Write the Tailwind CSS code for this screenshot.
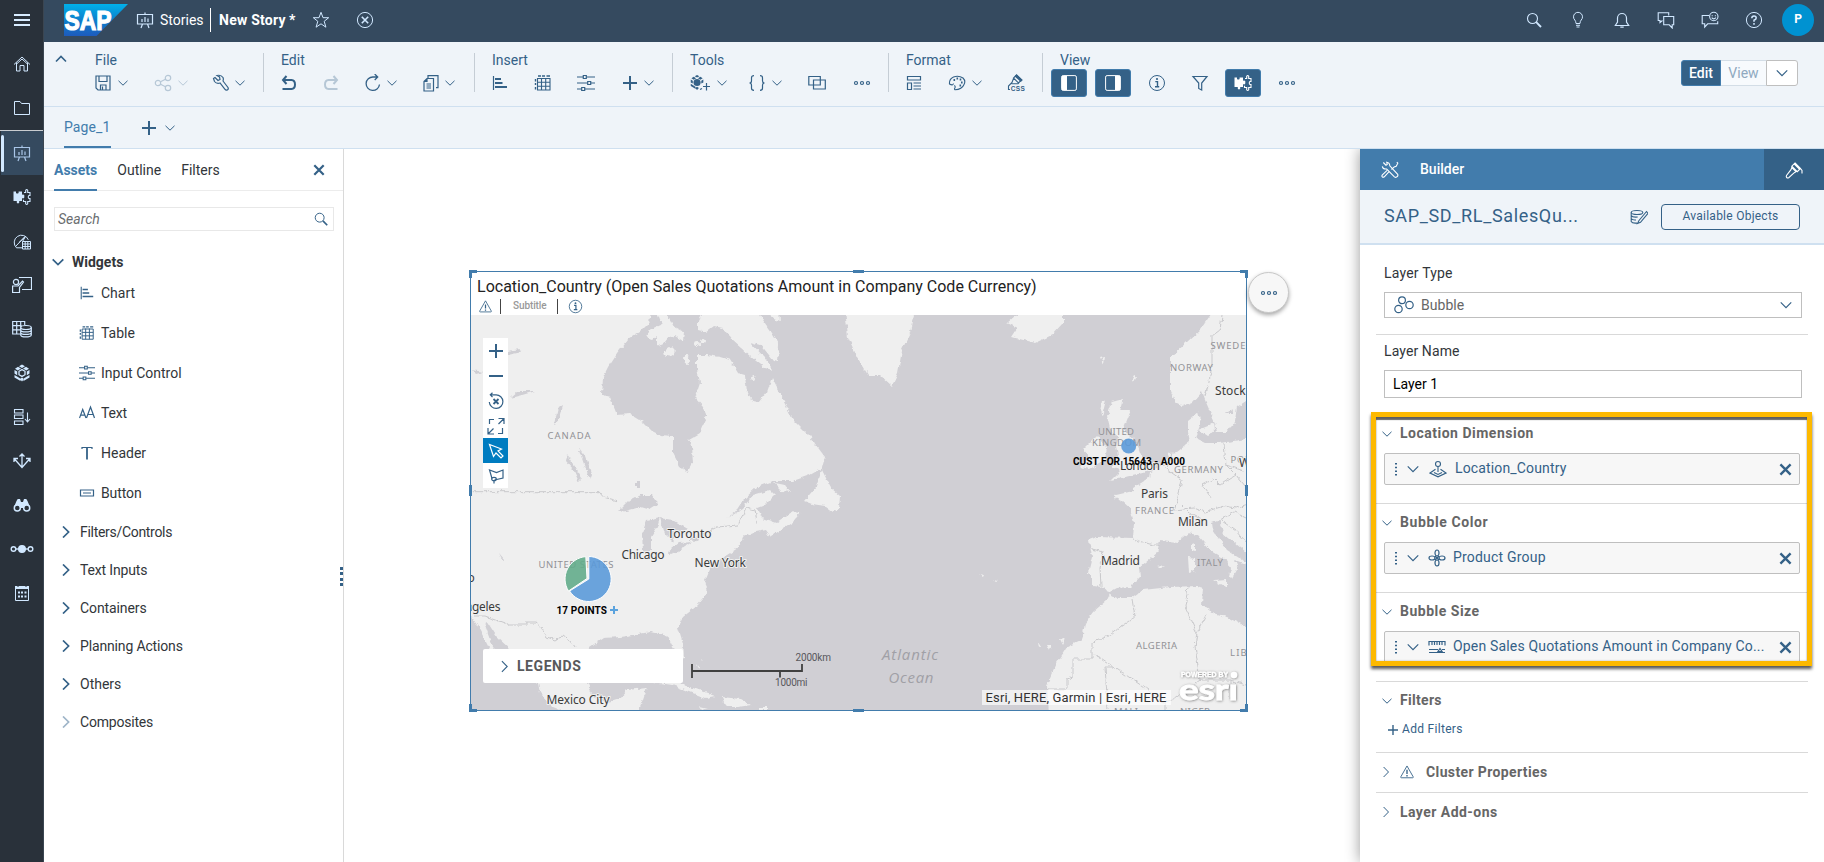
<!DOCTYPE html>
<html lang="en">
<head>
<meta charset="utf-8">
<title>New Story</title>
<script src="https://cdn.jsdelivr.net/npm/@tailwindcss/browser@4"></script>
</head>
<body class="w-[1824px] h-[862px] overflow-hidden bg-white font-[Roboto,'Liberation_Sans',sans-serif] text-sm text-[#32363a]">

<svg width="0" height="0" class="absolute" fill="none">
  <defs>
    <symbol id="down" viewBox="0 0 12 12"><path d="M1.500 3.800 6 8.200l4.500-4.400" fill="none" stroke="currentColor"/></symbol>
    <symbol id="downb" viewBox="0 0 12 12"><path d="M.7 3.300 6 8.500l5.300-5.200" fill="none" stroke="currentColor" stroke-width="1.700"/></symbol>
    <symbol id="right" viewBox="0 0 12 12"><path d="M3.600 1 8.500 6l-4.900 5" fill="none" stroke="currentColor"/></symbol>
    <symbol id="rightb" viewBox="0 0 12 12"><path d="M3 .5 8.600 6 3 11.500" fill="none" stroke="currentColor" stroke-width="1.700"/></symbol>
    <symbol id="up" viewBox="0 0 12 12"><path d="M1 8.500 6 3.500l5 5" fill="none" stroke="currentColor" stroke-width="1.600"/></symbol>
    <symbol id="x" viewBox="0 0 12 12"><path d="M1.300 1.300l9.400 9.400M10.700 1.300l-9.400 9.400" fill="none" stroke="currentColor" stroke-width="2.200"/></symbol>
    <symbol id="plus" viewBox="0 0 18 18"><path d="M9 2v14M2 9h14" fill="none" stroke="currentColor" stroke-width="2"/></symbol>
    <symbol id="dots" viewBox="0 0 18 18"><g fill="none" stroke="currentColor" stroke-width="1.200"><circle cx="3" cy="9" r="1.500"/><circle cx="9" cy="9" r="1.500"/><circle cx="15" cy="9" r="1.500"/></g></symbol>
    <symbol id="search" viewBox="0 0 18 18"><g fill="none" stroke="currentColor" stroke-width="1.100"><circle cx="7.500" cy="7.500" r="5"/><path d="M11.200 11.200l4.800 4.800" stroke-width="1.900"/></g></symbol>
    <symbol id="info" viewBox="0 0 18 18"><circle cx="9" cy="9" r="7.500" fill="none" stroke="currentColor"/><path d="M7.300 7.600h2.200v5M7 12.800h4.200" fill="none" stroke="currentColor" stroke-width="1.400"/><circle cx="9" cy="5" r="1.100" fill="currentColor"/></symbol>
    <symbol id="warn" viewBox="0 0 18 18"><path d="M9 2.200 16 14.500q.3 1-.8 1H2.800q-1.100 0-.8-1z" fill="none" stroke="currentColor"/><path d="M9 6.500v4.800M9 12.500v1.600" stroke="currentColor" stroke-width="1.500"/></symbol>
    <symbol id="easel" viewBox="0 0 18 18"><path d="M1.500 3.500h15v9.500h-15zM9 1.500v2M6.500 13l-1.500 4M11.500 13l1.500 4M6 8v3M9 6v5M12 7.500V11" fill="none" stroke="currentColor" stroke-width="1.200"/></symbol>
    <symbol id="puzzle" viewBox="0 0 18 18"><path d="M.5 3.500H3V5q1.300 1.200 2.600 0V3.500H9v3.300q1.500-.8 2.300.5v2.200q-.8 1.400-2.300.6V13H6.200v1.800q-1.200 1.500-2.400 0V13H.5z" fill="currentColor"/><path d="M11 4.500h1.700V2.300q1-1.600 2 0v2.200H17v3h-1.200q-1.300 1.500 0 3H17v3h-2.300v2.200q-1 1.600-2 0v-2.200h-2.200v-1.700" fill="none" stroke="currentColor" stroke-width="1.100"/></symbol>
    <symbol id="chart" viewBox="0 0 18 18"><path d="M2.500 2v14" stroke="currentColor" stroke-width="1.200"/><path d="M4 5h6M4 9h7.500M4 13h12" fill="none" stroke="currentColor" stroke-width="1.800"/></symbol>
    <symbol id="table" viewBox="0 0 18 18"><path d="M3.500 4.500h12.500v11.500H3.500zM7.500 4v12M11.700 4v12M3.500 8.300H16M3.500 12.200H16" fill="none" stroke="currentColor" stroke-width="1.100"/><path d="M4 2h3M8 2h3M12.500 2h3.500M1.500 5v2.500M1.500 9v2M1.500 13v2.500" stroke="currentColor" stroke-width="1.400"/></symbol>
    <symbol id="sliders" viewBox="0 0 18 18"><path d="M0 3h6M9.500 3H18M0 9h10.500M14 9h4M0 15h4.500M8 15h10" stroke="currentColor" stroke-width="1.200"/><path d="M6.300 1.500h3v3h-3zM10.700 7.500h3v3h-3zM4.700 13.500h3v3h-3z" fill="none" stroke="currentColor" stroke-width="1.200"/></symbol>
    <symbol id="cube" viewBox="0 0 18 18"><path d="M9 .5 12 2.200 9 4 6 2.200zM5 2.800 8 4.600 4.800 6.400 2 4.700zM13 2.800l3 1.900-2.800 1.700L10 4.600zM1.500 6l2.700 1.600v3.600L1.500 9.600zM16.500 6v3.600l-2.700 1.600V7.600zM1.500 11l3 1.700 3.200 2-.2 2.300-6-3.500zM16.500 11l-3 1.700-3.200 2 .2 2.300 6-3.500zM9 13.600l2 1.500-2 2.400-2-2.400z" fill="currentColor"/><path d="M9 5.600l3 1.700v3.400l-3 1.700-3-1.700V7.300z" fill="none" stroke="currentColor" stroke-width="1.300"/></symbol>
    <symbol id="brush" viewBox="0 0 18 18"><path d="M10 2l5.500 5.500-3.200 3.200-5.500-5.500zM6.800 6.500 11 10.700 9.300 11.700 3.700 16.700q-1.200.6-2-.2t-.2-2L6 8.700zM15.500 7.500l1.500 2v3" fill="none" stroke="currentColor" stroke-width="1.100"/><path d="M10 2l5.500 5.500-1.300 1.300-5.500-5.500z" fill="currentColor"/></symbol>
  </defs>
</svg>

<div class="flex h-full w-full">

<!-- Shell navigation -->
<nav class="flex w-11 shrink-0 flex-col border-r border-[#3b4651] bg-[#29313a] text-[#d1e8ff]">
  <div class="flex h-[42px] items-center justify-center"><svg class="-mt-0.5 h-4 w-4" viewBox="0 0 16 16"><path d="M0 3h16M0 8h16M0 13h16" stroke="#d8ecff" stroke-width="1.800"/></svg></div>
  <div class="flex h-11 items-center justify-center"><svg class="h-[18px] w-[18px]" viewBox="0 0 18 18" fill="none" stroke="currentColor"><path d="M1 9.500 9 2l8 7.500M3.500 7.500V16h3.500v-5.500h4V16h3.500V7.500M3 9.500l6-5.500 6 5.500"/></svg></div>
  <div class="flex h-[45px] items-center justify-center border-b border-[#c8ccd0]"><svg class="h-[18px] w-[18px]" viewBox="0 0 18 18" fill="none" stroke="currentColor"><path d="M1.500 15.500v-13H7l1.500 2h8v11z"/></svg></div>
  <div class="flex h-11 items-center border-l border-[#29313a] bg-[#354a5f]"><div class="h-[37px] w-[3px] rounded-sm bg-[#d1e8ff]"></div><svg class="ml-[9px] h-[18px] w-[18px] text-[#a9c6e8]"><use href="#easel"/></svg></div>
  <div class="flex h-11 items-center justify-center"><svg class="h-[18px] w-[18px]"><use href="#puzzle"/></svg></div>
  <div class="flex h-11 items-center justify-center"><svg class="h-[18px] w-[18px]" viewBox="0 0 18 18" fill="none" stroke="currentColor"><path d="M9 15.800H3.500a7.300 7.300 0 1 1 11.800-8M3 14l9-9.500M6 10.500l6.500-6-3 5"/><path d="M9.500 9.500h8v7.500h-8zM12.200 9.500V17M14.800 9.500V17M9.500 12h8M9.500 14.500h8"/></svg></div>
  <div class="flex h-11 items-center justify-center"><svg class="h-[18px] w-5" viewBox="0 0 20 18" fill="none" stroke="currentColor" stroke-width="1.200"><path d="M7 1.500h12.500v12H10"/><circle cx="4" cy="6" r="2.600"/><path d="M.6 16.500V10H6l4.500-5 1 1-4 5.500v5z"/></svg></div>
  <div class="flex h-11 items-center justify-center"><svg class="h-[18px] w-5" viewBox="0 0 20 18" fill="none" stroke="currentColor" stroke-width="1.200"><path d="M8 14H.7V1.500h12V5M4.700 1.500V14M8.700 1.500V7M.7 5.700h9M.7 9.800h7.500"/><ellipse cx="14" cy="7.500" rx="5.300" ry="2"/><path d="M8.700 7.500v7.500c0 2.600 10.600 2.600 10.600 0V7.500M8.700 10c0 2.600 10.600 2.600 10.600 0M8.700 12.500c0 2.600 10.600 2.600 10.600 0"/></svg></div>
  <div class="flex h-11 items-center justify-center"><svg class="h-[18px] w-[18px]"><use href="#cube"/></svg></div>
  <div class="flex h-11 items-center justify-center"><svg class="h-[18px] w-[18px]" viewBox="0 0 18 18" fill="none" stroke="currentColor" stroke-width="1.100"><path d="M1.500 1.500h8.500v3.500H1.500zM1.500 7h8.500v3.500H1.500zM1.500 13h8.500v3.500H1.500zM14.500 4.500v9M12 11l2.500 3 2.500-3"/></svg></div>
  <div class="flex h-11 items-center justify-center"><svg class="h-[18px] w-[18px]" viewBox="0 0 18 18" fill="none" stroke="currentColor" stroke-width="1.300"><path d="M9 2v13M6.500 4.500 9 2l2.500 2.500M1 10V6.500h4M1.500 7 9 15.500 16.500 7M17 10V6.500h-4"/></svg></div>
  <div class="flex h-11 items-center justify-center"><svg class="h-[18px] w-[18px]" viewBox="0 0 18 18" fill="currentColor"><path d="M3.500 5l1.200-2H7l1 3h2l1-3h2.300l1.200 2 2.500 6-4 4-3-3h-2l-3 3-4-4z"/><g fill="#29313a" stroke="currentColor" stroke-width="1.500"><circle cx="4.300" cy="12" r="3"/><circle cx="13.700" cy="12" r="3"/></g></svg></div>
  <div class="flex h-11 items-center justify-center"><svg class="h-3 w-6" viewBox="0 0 24 12" fill="none" stroke="currentColor" stroke-width="1.400"><circle cx="3.500" cy="6" r="2.300"/><circle cx="20.500" cy="6" r="2.300"/><path d="M6 6h12"/><circle cx="12" cy="6" r="3.300" fill="currentColor"/></svg></div>
  <div class="flex h-11 items-center justify-center"><svg class="h-4 w-4" viewBox="0 0 16 16" fill="none" stroke="currentColor"><path d="M1.500 1.500h13v14h-13z"/><path d="M1 2.500h14" stroke-width="3"/><path d="M4 0v2M12 0v2" stroke="#29313a"/><path d="M4 7.500h2M7 7.500h2M10.500 7.500h2M4 11.500h2M7 11.500h2M10.500 11.500h2" stroke-width="2"/></svg></div>
</nav>

<div class="flex min-w-0 flex-1 flex-col">

<!-- Shell bar -->
<header class="flex h-[42px] shrink-0 items-center bg-[#354a5f] pb-0.5 pl-5 text-[#d1e8ff]">
  <svg class="h-8 w-16" viewBox="0 0 64 32"><defs><linearGradient id="lg" x2="0" y2="1"><stop stop-color="#00b1eb"/><stop offset=".5" stop-color="#0d80cc"/><stop offset="1" stop-color="#1d5bbd"/></linearGradient></defs><path d="M0 0h64L32.500 32H0z" fill="url(#lg)"/><text x="0.500" y="25.500" font-family="Liberation Sans" font-weight="700" font-size="27" textLength="47" lengthAdjust="spacingAndGlyphs" fill="#fff" stroke="#fff" stroke-width="1.200">SAP</text></svg>
  <svg class="ml-2 h-[18px] w-[18px]"><use href="#easel"/></svg>
  <span class="ml-[6px] w-[43px] text-white">Stories</span>
  <div class="ml-[7px] h-6 w-px bg-white"></div>
  <span class="ml-2 w-[69px] whitespace-nowrap font-bold tracking-[0.25px] text-white">New Story</span><span class="ml-px w-2 font-bold text-white">*</span>
  <svg class="ml-[15px] h-[18px] w-[18px]" viewBox="0 0 18 18" fill="none" stroke="currentColor"><path d="M9 1.300l2 5.400h5.700l-4.500 3.600 1.700 5.900L9 12.800l-4.900 3.400L5.800 10.300 1.300 6.700H7z"/></svg>
  <svg class="ml-[26px] h-[18px] w-[18px]" viewBox="0 0 18 18" fill="none" stroke="currentColor"><circle cx="9" cy="9" r="7.600"/><path d="M5.800 5.800l6.400 6.400M12.200 5.800l-6.400 6.400" stroke-width="1.600"/></svg>
  <div class="ml-auto mr-[10px] flex items-center gap-[26px]">
    <svg class="h-[18px] w-[18px]"><use href="#search"/></svg>
    <svg class="h-[18px] w-[18px]" viewBox="0 0 18 18" fill="none" stroke="currentColor"><path d="M7 12.500q0-2-1.200-3.500a4.500 4.500 0 1 1 6.400 0Q11 10.500 11 12.500zM7 14.300h4M7.500 16h3"/></svg>
    <svg class="h-[18px] w-[18px]" viewBox="0 0 18 18" fill="none" stroke="currentColor"><path d="M2.300 14.500 4.500 11V7a4.500 4.500 0 0 1 9 0v4l2.200 3.500zM7.300 16.200h3.400" stroke-width="1.200"/></svg>
    <svg class="h-[18px] w-[18px]" viewBox="0 0 18 18" fill="none" stroke="currentColor" stroke-width="1.100"><path d="M5.500 9.500 3 11.500v-2H1.200V1.700h10.500V4.500M6.700 5.500h10v8.300h-1.500V17l-3-3.200H6.700z"/></svg>
    <svg class="h-[18px] w-[18px]" viewBox="0 0 18 18" fill="none" stroke="currentColor" stroke-width="1.100"><path d="M8 4.500H1.200v8.300h2.500V16l3-3.200h10v-2.500"/><circle cx="12.800" cy="5.500" r="4.200"/><path d="M11.200 4.200v1M14.400 4.200v1M10.700 6.600q2 2.500 4.200 0"/></svg>
    <svg class="h-[18px] w-[18px]" viewBox="0 0 18 18" fill="none" stroke="currentColor"><circle cx="9" cy="9" r="7.600"/><path d="M6.800 7.300q0-2.300 2.200-2.300t2.200 2Q11.200 8.300 9 9.300v1.500M9 12v1.700" stroke-width="1.500"/></svg>
    <div class="-ml-[7px] flex h-8 w-8 items-center justify-center rounded-full bg-[#0092d1] text-[12px] font-bold text-white">P</div>
  </div>
</header>

<!-- Toolbar -->
<div class="flex h-[65px] shrink-0 border-b border-[#cfe0f0] bg-[#eff4f9] text-[#346187]">
  <svg class="mt-[11px] ml-[11px] h-3 w-3"><use href="#up"/></svg>
  <div class="ml-7 flex flex-col">
    <span class="mt-2 h-5 leading-5">File</span>
    <div class="flex h-7 -mt-px items-center">
      <svg class="-ml-px h-[18px] w-[18px]" viewBox="0 0 18 18" fill="none" stroke="currentColor" stroke-width="1.200"><path d="M2 2h14v14H4l-2-2zM5 2v5.500h8V2M6.500 16v-5H12v5"/><path d="M8.500 12.500V16"/></svg>
      <svg class="ml-[5px] h-3 w-3"><use href="#down"/></svg>
      <svg class="ml-[25px] h-[18px] w-[18px] opacity-30" viewBox="0 0 18 18" fill="none" stroke="currentColor" stroke-width="1.200"><circle cx="4" cy="9" r="2.700"/><circle cx="14" cy="4" r="2.700"/><circle cx="14" cy="14" r="2.700"/><path d="M6.500 7.800 11.500 5.200M6.500 10.200l5 2.600"/></svg>
      <svg class="ml-[5px] h-3 w-3 opacity-30"><use href="#down"/></svg>
      <svg class="ml-[23px] h-[18px] w-[18px]" viewBox="0 0 18 18" fill="none" stroke="currentColor" stroke-width="1.200"><path d="M3 3.500 6 6.500 8 5.500 7.500 3 5 1.500q4-1 6 2 .7 1.500 0 3.500L16 13.500q.8 1.700-.7 2.500-1.300.7-2.500-.8L8 9q-3.500 1-5.500-1.500L1.500 4.500z"/></svg>
      <svg class="ml-[4px] h-3 w-3"><use href="#down"/></svg>
    </div>
  </div>
  <div class="ml-[17px] mt-[11px] h-[39px] w-px bg-[#c5cdd5]"></div>
  <div class="ml-[17px] flex flex-col">
    <span class="mt-2 h-5 leading-5">Edit</span>
    <div class="flex h-7 -mt-px items-center">
      <svg class="-ml-px h-[18px] w-[18px]" viewBox="0 0 18 18" fill="none" stroke="currentColor" stroke-width="2"><path d="M6.500 2 3 6l3.500 4M3 6h8.500q3.500.3 3.500 4.500t-3.500 4.500H2.500"/></svg>
      <svg class="ml-6 h-[18px] w-[18px] opacity-30" viewBox="0 0 18 18" fill="none" stroke="currentColor" stroke-width="2"><path d="M11.500 2 15 6l-3.500 4M15 6H6.500Q3 6.300 3 10.500t3.500 4.500h9"/></svg>
      <svg class="ml-6 h-[18px] w-[18px]" viewBox="0 0 18 18" fill="none" stroke="currentColor" stroke-width="1.300"><path d="M15.500 10.500A6.700 6.700 0 1 1 9 3h4M10.700 0l3 3-3 3"/></svg>
      <svg class="ml-[4px] h-3 w-3"><use href="#down"/></svg>
      <svg class="ml-6 h-[18px] w-[18px]" viewBox="0 0 18 18" fill="none" stroke="currentColor" stroke-width="1.200"><path d="M2 7.500 5 4.500h6.500V17H2zM2 7.500h3v-3M4.500 10h4.500M4.500 12h4.500M4.500 14h4.500M6 4.500V1.700h10v12h-2"/></svg>
      <svg class="ml-[4px] h-3 w-3"><use href="#down"/></svg>
    </div>
  </div>
  <div class="ml-[18px] mt-[11px] h-[39px] w-px bg-[#c5cdd5]"></div>
  <div class="ml-[17px] flex flex-col">
    <span class="mt-2 h-5 leading-5">Insert</span>
    <div class="flex h-7 -mt-px items-center">
      <svg class="-ml-px h-[18px] w-[18px]"><use href="#chart"/></svg>
      <svg class="ml-[25px] h-[18px] w-[18px]"><use href="#table"/></svg>
      <svg class="ml-[25px] h-[18px] w-[18px]"><use href="#sliders"/></svg>
      <svg class="ml-[26px] h-[18px] w-[18px]"><use href="#plus"/></svg>
      <svg class="ml-[4px] h-3 w-3"><use href="#down"/></svg>
    </div>
  </div>
  <div class="ml-[17px] mt-[11px] h-[39px] w-px bg-[#c5cdd5]"></div>
  <div class="ml-[17px] flex flex-col">
    <span class="mt-2 h-5 leading-5">Tools</span>
    <div class="flex h-7 -mt-px items-center">
      <svg class="h-[18px] w-5" viewBox="0 0 20 18"><g transform="scale(.94)"><path d="M7.500 1 10 2.300 7.500 3.700 5 2.300zM4 3l2.500 1.500L4 6 1.500 4.500zM11 3l2.500 1.500L11 6 8.500 4.500zM.8 5.800 3 7.200v3L.8 9zM14.200 5.800 12 7.200v3L14.200 9zM.8 10.500l5 3-.1 2.300-4.900-3zM7.500 13.500l2 1.300-2 2.300-2-2.300z" fill="currentColor"/><circle cx="7.500" cy="9" r="3.800" fill="currentColor"/></g><path d="M16.500 9v7.500M13 12.500h7M10 15.500l2-1" stroke="currentColor" stroke-width="1.200"/></svg>
      <svg class="ml-[6px] h-3 w-3"><use href="#down"/></svg>
      <svg class="ml-5 h-[18px] w-[18px]" viewBox="0 0 18 18" fill="none" stroke="currentColor" stroke-width="1.200"><path d="M6 1.700q-2.500 0-2.500 2v3Q3.500 9 1.500 9q2 0 2 2.300v3q0 2 2.500 2M12 1.700q2.500 0 2.500 2v3Q14.500 9 16.500 9q-2 0-2 2.300v3q0 2-2.500 2"/></svg>
      <svg class="ml-[5px] h-3 w-3"><use href="#down"/></svg>
      <svg class="ml-[25px] h-[18px] w-[18px]" viewBox="0 0 18 18" fill="none" stroke="currentColor" stroke-width="1.200"><path d="M.8 2.500h11.500v8.500H.8zM5.500 6h11.800v9H5.500z"/></svg>
      <svg class="ml-[27px] h-[18px] w-[18px]"><use href="#dots"/></svg>
    </div>
  </div>
  <div class="ml-[17px] mt-[11px] h-[39px] w-px bg-[#c5cdd5]"></div>
  <div class="ml-[17px] flex flex-col">
    <span class="mt-2 h-5 leading-5">Format</span>
    <div class="flex h-7 -mt-px items-center">
      <svg class="-ml-px h-[18px] w-[18px]" viewBox="0 0 18 18" fill="none" stroke="currentColor" stroke-width="1.200"><path d="M2.500 2.500h13V6h-13zM2.500 9h4v6.500h-4zM8.500 9H16M8.500 12H16M8.500 15H16"/></svg>
      <svg class="ml-[25px] h-[18px] w-[18px]" viewBox="0 0 18 18" fill="none" stroke="currentColor" stroke-width="1.100"><path d="M5.500 9.500Q5 12 1.500 10 1 5 5.500 3q5-2 9.500 1 3 3 1 6.500Q14 15.500 7 15.800q-1-.5 0-2 .5-2-.8-2.300"/><path d="M5.500 6h1.600M8.500 4.500h1.600M11.700 5.500h1.600M13 8.500h1.600M11.500 11.500h1.600" stroke-width="1.800"/></svg>
      <svg class="ml-[5px] h-3 w-3"><use href="#down"/></svg>
      <svg class="ml-6 h-[18px] w-[18px]" viewBox="0 0 18 18" fill="none" stroke="currentColor" stroke-width="1.100"><path d="M9.500 1l5 5-3 3-5-5zM6.500 4.500 5 8.500 1.500 12v3.500h1.500M4.500 9.800h6.500l1-1"/><path d="M9.500 1l5.500 5-1.200 1.200-5.500-5z" fill="currentColor"/><text x="3.800" y="17.200" font-size="6.500" font-weight="700" font-family="Liberation Sans" fill="currentColor" stroke="none" textLength="14">CSS</text></svg>
    </div>
  </div>
  <div class="ml-[17px] mt-[11px] h-[39px] w-px bg-[#c5cdd5]"></div>
  <div class="ml-2 flex flex-col">
    <span class="mt-2 h-5 pl-[9px] leading-5">View</span>
    <div class="flex h-7 -mt-px items-center">
      <div class="flex h-7 w-9 items-center justify-center rounded-[3px] border border-[#427cac] bg-[#346187] text-white"><svg class="h-4 w-4" viewBox="0 0 16 16"><rect x=".6" y=".6" width="14.800" height="14.800" rx="1.500" fill="none" stroke="#fff"/><path d="M1 1h5v14H1z" fill="#fff"/></svg></div>
      <div class="ml-2 flex h-7 w-9 items-center justify-center rounded-[3px] border border-[#427cac] bg-[#346187] text-white"><svg class="h-4 w-4" viewBox="0 0 16 16"><rect x=".6" y=".6" width="14.800" height="14.800" rx="1.500" fill="none" stroke="#fff"/><path d="M10 1h5v14h-5z" fill="#fff"/></svg></div>
      <svg class="ml-[17px] h-[18px] w-[18px]"><use href="#info"/></svg>
      <svg class="ml-[25px] h-[18px] w-[18px]" viewBox="0 0 18 18" fill="none" stroke="currentColor" stroke-width="1.200"><path d="M2 2.500h14L10.700 9v7l-3-1.500V9z"/></svg>
      <div class="ml-4 flex h-7 w-9 items-center justify-center rounded-[3px] border border-[#427cac] bg-[#346187] text-white"><svg class="h-[18px] w-[18px]"><use href="#puzzle"/></svg></div>
      <svg class="ml-[17px] h-[18px] w-[18px]"><use href="#dots"/></svg>
    </div>
  </div>
  <div class="ml-auto mr-[26px] mt-[18px] flex h-[26px]">
    <div class="flex w-10 items-center justify-center rounded-l-[3px] border border-[#427cac] bg-[#346187] font-medium text-white">Edit</div>
    <div class="flex w-[45px] items-center justify-center border-y border-[#d3dde6] bg-[#f7fafd] text-[#8fa9c0]">View</div>
    <div class="flex w-8 items-center justify-center rounded-r-[3px] border border-[#bfbfbf] bg-white text-[#346187]"><svg class="h-[14px] w-[14px]"><use href="#down"/></svg></div>
  </div>
</div>

<!-- Page tabs -->
<div class="flex h-[42px] shrink-0 items-center border-b border-[#cfe0f0] bg-[#eff4f9] pl-5 text-[#427cac]">
  <div class="flex h-[41px] w-[47px] items-center border-b-2 border-[#427cac] tracking-[0.1px]">Page_1</div>
  <svg class="ml-[29px] h-[18px] w-[18px] text-[#346187]"><use href="#plus"/></svg>
  <svg class="ml-[6px] h-3 w-3 text-[#346187]"><use href="#down"/></svg>
</div>

<div class="flex min-h-0 flex-1">

<!-- Assets panel -->
<aside class="relative w-[300px] shrink-0 border-r border-[#d9d9d9]">
  <div class="flex h-[42px] items-center gap-5 border-b border-[#ececec] pl-[10px] pr-[18px]">
    <div class="flex h-[42px] items-center border-b-2 border-[#427cac] pt-0.5 font-bold text-[#427cac]">Assets</div>
    <span>Outline</span>
    <span>Filters</span>
    <svg class="ml-auto h-3 w-3 text-[#346187]"><use href="#x"/></svg>
  </div>
  <div class="mx-[10px] mr-[9px] mt-4 flex h-6 items-center justify-between border border-[#e8e8e8] pl-[3px] pr-1 italic text-[#6a6d70]"><span>Search</span><svg class="h-4 w-4 text-[#346187]"><use href="#search"/></svg></div>
  <div class="mt-5 flex h-[22px] items-center pl-2 font-bold"><svg class="h-3 w-3 text-[#346187]"><use href="#downb"/></svg><span class="ml-2">Widgets</span></div>
  <ul class="pl-[35px]">
    <li class="flex h-10 items-center gap-[6px]"><svg class="h-4 w-4 text-[#346187]"><use href="#chart"/></svg><span>Chart</span></li>
    <li class="flex h-10 items-center gap-[6px]"><svg class="h-4 w-4 text-[#346187]"><use href="#table"/></svg><span>Table</span></li>
    <li class="flex h-10 items-center gap-[6px]"><svg class="h-4 w-4 text-[#346187]"><use href="#sliders"/></svg><span>Input Control</span></li>
    <li class="flex h-10 items-center gap-[6px]"><svg class="h-4 w-4 text-[#346187]" viewBox="0 0 16 16" fill="none" stroke="currentColor" stroke-width="1.200"><path d="M.5 13 3.700 4.500 7 13M1.700 10.200h4M7.500 13l4-11 4 11M9 9.500h5"/></svg><span class="tracking-[-0.2px]">Text</span></li>
    <li class="flex h-10 items-center gap-[6px]"><svg class="h-4 w-4 text-[#346187]" viewBox="0 0 16 16" fill="none" stroke="currentColor"><path d="M3 4V2.500h10V4" stroke-width="1.200"/><path d="M8 2v12.500" stroke-width="1.800"/></svg><span>Header</span></li>
    <li class="flex h-10 items-center gap-[6px]"><svg class="h-4 w-4 text-[#346187]" viewBox="0 0 16 16" fill="none" stroke="currentColor"><path d="M1.500 5h13v6h-13zM4 8h8" stroke-width="1.200"/></svg><span class="tracking-[-0.1px]">Button</span></li>
  </ul>
  <ul class="pl-4">
    <li class="flex h-[38px] items-center gap-2"><svg class="h-3 w-3 text-[#346187]"><use href="#rightb"/></svg><span class="tracking-[-0.3px]">Filters/Controls</span></li>
    <li class="flex h-[38px] items-center gap-2"><svg class="h-3 w-3 text-[#346187]"><use href="#rightb"/></svg><span class="tracking-[-0.15px]">Text Inputs</span></li>
    <li class="flex h-[38px] items-center gap-2"><svg class="h-3 w-3 text-[#346187]"><use href="#rightb"/></svg><span class="tracking-[-0.1px]">Containers</span></li>
    <li class="flex h-[38px] items-center gap-2"><svg class="h-3 w-3 text-[#346187]"><use href="#rightb"/></svg><span class="tracking-[-0.15px]">Planning Actions</span></li>
    <li class="flex h-[38px] items-center gap-2"><svg class="h-3 w-3 text-[#346187]"><use href="#rightb"/></svg><span>Others</span></li>
    <li class="flex h-[38px] items-center gap-2"><svg class="h-3 w-3 text-[#9fb5c8]"><use href="#rightb"/></svg><span class="tracking-[-0.2px]">Composites</span></li>
  </ul>
  <svg class="absolute right-0 top-[418px] h-[20px] w-[3px]" viewBox="0 0 3 20" fill="#346187"><path d="M0 0h3v3H0zM0 5h3v3H0zM0 11h3v3H0zM0 16h3v3H0z"/></svg>
</aside>

<!-- Canvas -->
<main class="relative min-w-0 flex-1">
  <section class="absolute left-[126px] top-[122px] h-[440px] w-[777px] border border-[#427cac] bg-white">
    <div class="flex h-[43px] flex-col pl-[6px]">
      <h2 class="mt-1 h-[22px] whitespace-nowrap text-[16px] leading-[22px] tracking-[0.01px] text-[#222]">Location_Country (Open Sales Quotations Amount in Company Code Currency)</h2>
      <div class="flex h-[16px] items-center text-[10px] text-[#999]"><svg class="ml-px h-[15px] w-[15px] text-[#346187]"><use href="#warn"/></svg><div class="ml-[7px] h-[15px] w-px bg-[#444]"></div><span class="ml-3 w-[33px] whitespace-nowrap font-medium tracking-[-0.1px]">Subtitle</span><div class="ml-[11px] h-[15px] w-px bg-[#444]"></div><svg class="ml-[10px] h-[15px] w-[15px] text-[#346187]"><use href="#info"/></svg></div>
    </div>
    <svg class="block h-[395px] w-[775px]" viewBox="471 315 775 395">
      <defs>
        <filter id="coast" x="0" y="0" width="1" height="1"><feTurbulence type="fractalNoise" baseFrequency=".18" numOctaves="3" seed="4"/><feDisplacementMap in="SourceGraphic" scale="5" xChannelSelector="R" yChannelSelector="G"/></filter>
        <filter id="glow" x="-.2" y="-.2" width="1.400" height="1.400"><feDropShadow dx=".5" dy=".5" stdDeviation="1" flood-color="#555" flood-opacity=".75"/></filter>
      </defs>
      <rect x="471" y="315" width="775" height="395" fill="#d0cfd4"/>
      <g filter="url(#coast)">
      <rect x="465" y="310" width="787" height="405" fill="#d0cfd4"/>
      <g fill="#efefef">
        <path d="M465 310H651L649 323 640 332 627 340 617 353 608 367 603 377 602 395 610 397 617 415 630 414 643 422 652 431 660 435 673 436V453L680 467 688 472 693 463 692 447 688 440 700 433 706 420 703 407 695 398 700 383 697 370V355L707 355 720 357 730 360 738 373 745 375 747 393 753 402 758 403 767 392 772 378 777 388 785 403 793 420 810 437 825 457 822 468 810 475 793 481 773 481 757 487 743 500 736 511 727 518 742 509 753 495 770 490 775 495 765 505 757 508 762 518 777 523 793 512 800 513 793 522 770 537 765 530 755 532 743 537 738 548 727 555 712 563 705 580 708 593 698 605 683 617 678 627 683 643 684 657 679 658 673 647 668 637 660 634 650 632 633 635 620 637 603 638 587 649 585 667 587 683 593 697 607 702 620 698 627 690 647 688 643 700 637 715H573L553 707 540 693 538 683 520 660 510 649 497 637 488 623 485 625 493 647 500 655 490 650 480 630 465 606z"/>
        <path d="M657 312l5 12-13 6-3 8 6 2 5-4 0 8 5 2 7-9 6-1 8 5 1-9-10-5-8-15z"/>
        <path d="M703 310l-5 10 0 10 8 2 8-6 9 2 9 12 19 17 14 11 8 2-9-13-14-15 11 3 12 15 5 1 1-16-7-12-10-14-4-9zM768 310l11 0 1 12-8-4z"/>
        <ellipse cx="670" cy="352" rx="6" ry="4" transform="rotate(-25 670 352)"/><ellipse cx="687" cy="360" rx="3" ry="5"/><ellipse cx="697" cy="344" rx="3" ry="2"/><ellipse cx="703" cy="341" rx="3" ry="2"/><circle cx="753" cy="378" r="2"/>
        <path d="M822 470l-6 17-12 14 8 3 13 2 8 6 6-4 1-12-8-7-5-9zM774 483l10 2 6 7-8-1z"/>
        <path d="M653 682l20 0 20 6 23 8-10 2-16-6-18-7zM722 697l18 2 11 6-13 2-12 0zM699 706l8 2-5 2zM759 707h8v3h-8zM696 664l3 4-1 2zM701 658l2 4-1 0z"/>
        <path d="M845 310l3 27 9 20 11 18 12 0 12 11 6-13 4-23 8-17 2-11 4-12z"/>
        <path d="M1023 310l-9 7-7 6 11 5-6 9 15 4 8 2 17-8 11-12V310z"/>
        <path d="M1100 357l4-1-1 8zM1132 381l3-6 2 1-3 6zM1102 402l4-2-4 16-2-5z"/>
        <path d="M1112 402l11-3-3 11 11 0-6 15-2 5 12 10 7 17 8 2 2 9-9 5-10 2-23 6 10-10-8-5 6-10-2-10 2-8-8-9-3-13z"/>
        <path d="M1097 435l10 12-2 13-15 9-10-2 8-10-4-9 6-6z"/>
        <path d="M1214 310l-14 20-13 12-17 16v32l5 12 8 4 10-4 9-10 3 8 10 23 2 9h10l8-10 2-15 15-10V381l-6-10 1-16 6-8V310z"/>
        <path d="M1188 420 1198 412 1201 423 1195 438 1205 443 1220 443 1240 440 1255 437V558L1246 552 1223 533 1220 520 1212 523 1213 530 1227 550 1243 560 1248 566 1235 561 1238 568 1232 579 1229 576 1231 568 1227 560 1210 550 1197 535 1188 533 1177 542 1160 540 1157 553 1139 568 1140 577 1130 587 1117 588 1108 593 1103 587 1092 586 1092 576 1088 573 1092 557 1089 540 1097 537 1133 538 1134 523 1130 508 1123 502 1115 498 1116 495 1133 491 1133 488 1149 478 1150 472 1162 465 1170 453 1177 452 1190 442 1188 432z"/>
        <path d="M1198 430l10-4 6-4 1 8-8 6zM1213 580l14-1 0 9zM1188 557l7 1 0 13-6 2zM1192 544l3-1 0 9-3-1zM1156 567l8-2-2 4z"/>
        <path d="M1110 594l8 4h14l11-8 27-3 27-1 6 2-1 17 11 8 17 5 22 12V715H1049L1047 685 1057 663 1067 647 1082 640 1085 623 1093 612 1107 600zM1038 642l3 5-2 1zM1047 645h5l-3 4zM1060 640l5-2-3 6zM978 574l6 1-1 2zM993 579l5 1-2 1z"/>
      </g>
      <g fill="#d0cfd4">
        <path d="M618 512l12-12 10-5h12l6 10-8 5-10-3-14 4z"/>
        <path d="M643 552l-1-19 5-13 13-3-3 10-6 10 0 14z"/>
        <path d="M660 518l13 2 14 8-10 4-4 10-8-8z"/>
        <path d="M667 552l12-9 13-1-12 8-9 4zM690 540l13-8 0 3-9 6z"/>
        <path d="M578 447l8 10 6 17-2 5-5-12zM567 455l8 12 7 12-3 3-6-13-7-8zM558 408l5-3-5 17-4 2zM510 398l8-7 18 0-14 4zM508 351l12-2 2 3-14 3zM472 370l12 2-8 2zM499 553l5 6-1 2zM636 482h4v6h-4z"/>
        <path d="M1225 413l8-3 0 3z"/>
      </g>
      <g fill="none" stroke="#c9c9cc">
        <path d="M465 491.700H599l4 5 14 4M690 541l27-14 21-2 9-17 8 2 2 13"/>
        <path d="M475 616h10l25 9h16v-3h9l7 6 5 9 8 3 8-5 7 5 5 8"/>
        <path d="M1222 315l-2 15-8 6 0 30-4 20-3 10"/>
        <path d="M1132 599l3 18-15 10-10 8-18 8v16h-19v18l-6 2v10h-22M1092 652l56 38 15 12 10-2 27-20-5-33 2-14-12-26 3-20M1197 633l10-20M1105 667l3 43M1105 667h8M1200 680h30l16 5M1165 702v10M1230 680v20"/>
        <path d="M1133 539l20 6 7 0M1092 549l12 3-4 16 1 18M1162 465l10 8 10 7-4 18-4 12 20-2 10 4 20-6 12 2 18-6M1224 443l2 22 10 10-16 10-6-6-12 6 10 14M1172 453l-4 14M1182 505l8 8 12 6M1220 520l14-8 12 6M1226 465l18 6M1236 475l10 12M1222 520l14 10 10 12"/>
      </g>
      </g>
      <g font-family="Noto Sans, Open Sans, sans-serif" font-size="9.500" fill="#929296">
        <text x="547.500" y="439" textLength="43">CANADA</text><text x="538.500" y="568" textLength="75">UNITED STATES</text>
        <text x="1210.500" y="349" textLength="43">SWEDEN</text><text x="1170" y="371" textLength="43">NORWAY</text>
        <text x="1098" y="435" textLength="36">UNITED</text><text x="1092" y="446" textLength="49">KINGDOM</text>
        <text x="1174" y="473" textLength="49">GERMANY</text><text x="1230.500" y="463" textLength="42">POLAND</text>
        <text x="1135" y="514" textLength="39">FRANCE</text><text x="1197" y="566" textLength="26">ITALY</text>
        <text x="1136" y="649" textLength="41">ALGERIA</text><text x="1230" y="656" textLength="30">LIBYA</text>
        <text x="1114" y="714.500" textLength="24">MALI</text><text x="1180" y="714.500" textLength="30">NIGER</text>
      </g>
      <g font-family="Noto Sans, Open Sans, sans-serif" font-size="12" fill="#3b3b3b" stroke="#efefef" stroke-width="2" paint-order="stroke" stroke-linejoin="round">
        <text x="667.500" y="538" textLength="44">Toronto</text><text x="621.500" y="559" textLength="43">Chicago</text><text x="694.500" y="567" textLength="51.500">New York</text>
        <text x="465" y="611" textLength="35.500">ngeles</text><text x="467.500" y="582">o</text><text x="546.500" y="704" textLength="63">Mexico City</text>
        <text x="1215" y="395" textLength="60">Stockholm</text><text x="1120" y="470" textLength="40">London</text><text x="1239" y="467">Wa</text>
        <text x="1141" y="498" textLength="27">Paris</text><text x="1178" y="526" textLength="30">Milan</text><text x="1101" y="565" textLength="39">Madrid</text>
      </g>
      <g font-family="Open Sans, sans-serif" font-style="italic" font-size="15" fill="#a0a0a6">
        <text x="882" y="660" textLength="56">Atlantic</text><text x="888.500" y="683" textLength="45">Ocean</text>
      </g>
      <g stroke="#fff" stroke-width="1"><path d="M588.800 579V556.500a22.500 22.500 0 1 1-19.200 34.500z" fill="#5899da" fill-opacity=".88"/><path d="M587 578.500 568.500 591a22.500 22.500 0 0 1 17.300-34.400z" fill="#63ac8b" fill-opacity=".9"/></g>
      <circle cx="1128.700" cy="446" r="7.500" fill="#5899da" fill-opacity=".88"/>
      <g font-family="Roboto, sans-serif" font-weight="700" font-size="10" fill="#000">
        <text x="556.500" y="614" textLength="50.500">17 POINTS</text><text x="1073" y="464.800" textLength="112">CUST FOR 15643 - A000</text>
      </g>
      <path d="M614 606v8M610 610h8" stroke="#5ba3de" stroke-width="2"/>
      <path d="M692 664v14M692 671h110v-7M780 671v6.500" fill="none" stroke="#404040" stroke-width="1.800"/>
      <g font-family="Roboto, sans-serif" font-size="10" fill="#58585c"><text x="795.500" y="661" textLength="35.500">2000km</text><text x="775" y="686" textLength="32.500">1000mi</text></g>
      <rect x="982" y="690" width="189" height="15" fill="#fff" fill-opacity=".66"/>
      <text x="985.500" y="702" textLength="181" font-family="Roboto, sans-serif" font-size="13" fill="#323232">Esri, HERE, Garmin | Esri, HERE</text>
      <g filter="url(#glow)" fill="#fff" font-weight="700">
        <text x="1181" y="676.500" font-size="6.500" font-family="Liberation Sans, sans-serif" textLength="47" lengthAdjust="spacingAndGlyphs" stroke="#fff" stroke-width=".3">POWERED BY</text>
        <text x="1179" y="700" font-size="29" font-family="Lato, sans-serif" textLength="59" lengthAdjust="spacingAndGlyphs" stroke="#fff" stroke-width=".8">esrı</text><circle cx="1234" cy="675" r="3.300"/>
      </g>
    </svg>

    <div class="absolute left-3 top-[66px] flex w-[25px] flex-col bg-white text-[#346187]">
      <div class="flex h-[25px] items-center justify-center"><svg class="h-[18px] w-[18px]"><use href="#plus"/></svg></div>
      <div class="flex h-[25px] items-center justify-center"><svg class="h-[18px] w-[18px]" viewBox="0 0 18 18"><path d="M2 9h14" stroke="currentColor" stroke-width="2"/></svg></div>
      <div class="flex h-[25px] items-center justify-center"><svg class="h-[18px] w-[18px]" viewBox="0 0 18 18" fill="none" stroke="currentColor" stroke-width="1.200"><path d="M2.300 10A6.800 6.800 0 1 0 9 2.800H3.500M5.500.7l-2.200 2.100 2.200 2.200"/><path d="M6.500 7l5 5M11.500 7l-5 5" stroke-width="1.800"/></svg></div>
      <div class="flex h-[25px] items-center justify-center"><svg class="h-[18px] w-[18px]" viewBox="0 0 18 18" fill="none" stroke="currentColor" stroke-width="1.200"><path d="M2.500 7V2.500H7M11 16.500h4.500V11M11.500 1.500H17V7M17 1.500 11.500 7M1 11v6h6M1 17l5.500-5.500"/></svg></div>
      <div class="flex h-[25px] items-center justify-center bg-[#007cc0] text-white"><svg class="h-[18px] w-[18px]" viewBox="0 0 18 18" fill="none" stroke="currentColor" stroke-width="1.200"><path d="M2.500 2.500l4 12 2.500-3.500 5 5 2-2-5-5 3.500-2z"/></svg></div>
      <div class="flex h-[25px] items-center justify-center"><svg class="h-[18px] w-[18px]" viewBox="0 0 18 18" fill="none" stroke="currentColor" stroke-width="1.200"><path d="M5 11.500 2.500 3l7 2.500L16 3v8l-8.500 2M7 16.500V13.500"/><ellipse cx="7" cy="12" rx="2.300" ry="1.700"/></svg></div>
    </div>

    <div class="absolute left-3 top-[377px] flex h-[34px] w-[200px] items-center rounded-[2px] bg-white font-bold text-[#58595b]"><svg class="ml-[15px] h-[13px] w-[13px] text-[#346187]"><use href="#right"/></svg><span class="ml-[6px] tracking-[0.55px]">LEGENDS</span></div>

    <svg class="absolute -left-[2px] -top-[2px] h-[442px] w-[779px]" viewBox="0 0 779 442" fill="#427cac"><path d="M0 0h8v3H3v5H0zM771 0h8v8h-3V3h-5zM0 434h3v5h5v3H0zM776 434h3v8h-8v-3h5zM384 0h11v3h-11zM384 439h11v3h-11zM0 215h3v11H0zM776 215h3v11h-3z"/></svg>
  </section>

  <div class="absolute left-[904px] top-[123px] flex h-[41px] w-[41px] items-center justify-center rounded-full border border-[#c8c8c8] bg-[#f7f7f7] text-[#346187] shadow-[0_2px_4px_rgba(0,0,0,0.35)]"><svg class="h-[18px] w-[18px]"><use href="#dots"/></svg></div>
</main>

<!-- Builder panel -->
<aside class="relative flex w-[464px] shrink-0 flex-col bg-white shadow-[0_0_14px_rgba(0,0,0,0.4)] [clip-path:inset(0_0_0_-16px)]">
  <div class="flex h-[41px] shrink-0 items-center bg-[#427cac] text-white">
    <svg class="ml-[21px] h-[18px] w-[18px]" viewBox="0 0 18 18" fill="none" stroke="currentColor" stroke-width="1.100"><path d="M2.300 1.500 5 4.200 6.300 3.300 5.700 1.200q3 .3 3.100 3.600l7.700 8.200q.9 1.500-.3 2.700t-2.800.2L5.700 8Q2 8.500 1.300 5.300"/><path d="M15.800 1.200l1 1-1.600 3-2 .7L10.500 8.500M7.800 10.800l-4.500 5q-1.200.9-2 .1t.1-2l4.700-4.500"/></svg>
    <span class="-mt-[2px] ml-[21px] font-medium">Builder</span>
    <div class="ml-auto flex h-full w-[60px] items-center justify-center bg-[#346187]"><svg class="h-[18px] w-[18px]"><use href="#brush"/></svg></div>
  </div>
  <div class="flex h-[55px] shrink-0 items-center border-b-2 border-[#cfe0f0] bg-[#eff4f9] pl-6 pr-6 text-[#346187]">
    <span class="-mt-[2px] text-[18px] tracking-[0.65px]">SAP_SD_RL_SalesQu...</span>
    <svg class="ml-auto h-[18px] w-[18px]" viewBox="0 0 18 18" fill="none" stroke="currentColor" stroke-width="1.100"><ellipse cx="7" cy="4.500" rx="5.800" ry="2"/><path d="M1.200 4.500v9q1 2 5.800 1.500M1.200 7.500q1 2 6.500 1.500M1.200 10.500q1 1.800 4.800 1.500M16.500 3.500l-7.500 9-1.500 3 3-1.200 7.500-9z"/></svg>
    <div class="ml-[13px] flex h-[26px] w-[139px] items-center justify-center rounded-[4px] border border-[#346187] text-[12px] tracking-[0.25px]">Available Objects</div>
  </div>

  <div class="flex flex-col px-4">
    <div class="flex h-[90px] flex-col border-b border-[#d9d9d9] px-2">
      <span class="mt-[18px] leading-5 tracking-[0.2px]">Layer Type</span>
      <div class="mt-[9px] flex h-[26px] w-[418px] items-center border border-[#bfbfbf] pl-[9px] pr-2 text-[#666]">
        <svg class="h-[18px] w-5 text-[#346187]" viewBox="0 0 20 18" fill="none" stroke="currentColor" stroke-width="1.200"><circle cx="8" cy="4.300" r="3.400"/><circle cx="4.500" cy="13" r="3.700"/><circle cx="15.500" cy="9" r="3.700"/></svg>
        <span class="ml-[7px] tracking-[0.05px]">Bubble</span><svg class="ml-auto h-[14px] w-[14px] text-[#346187]"><use href="#down"/></svg></div>
    </div>
    <div class="flex h-[82px] flex-col px-2">
      <span class="mt-[6px] leading-5 tracking-[0.1px]">Layer Name</span>
      <div class="mt-[9px] flex h-7 w-[418px] items-center border border-[#bfbfbf] pl-2 text-black">Layer 1</div>
    </div>

    <div class="flex h-[87px] flex-col border-b border-[#d9d9d9] pr-2">
      <div class="mt-[5px] flex h-[21px] items-center pl-[5px] font-bold text-[#666]"><svg class="mt-[3px] h-3 w-3 text-[#346187]"><use href="#down"/></svg><span class="ml-[7px] tracking-[0.5px]">Location Dimension</span></div>
      <div class="ml-2 mt-[10px] flex h-8 items-center rounded-[2px] border border-[#bfbfbf] bg-[#f7f7f7] pr-[7px] text-[#346187]">
        <svg class="ml-[10px] h-[13px] w-[2px]" viewBox="0 0 2 13"><path d="M1 0v13" stroke="currentColor" stroke-width="2" stroke-dasharray="1.500 2.200"/></svg>
        <svg class="ml-[9px] h-[14px] w-[14px]"><use href="#down"/></svg>
        <svg class="ml-[9px] h-[18px] w-[18px]" viewBox="0 0 18 18" fill="none" stroke="currentColor" stroke-width="1.100"><circle cx="9" cy="4" r="2.500"/><path d="M9 6.500V12M6.500 9.300 1 13l8 3.800 8-3.800-5.500-3.700M5 12.500l4 2 4-2"/></svg>
        <span class="-mt-[3px] ml-[8px] tracking-[0.15px]">Location_Country</span><svg class="ml-auto h-[13px] w-[13px]"><use href="#x"/></svg>
      </div>
    </div>
    <div class="flex h-[89px] flex-col border-b border-[#d9d9d9] pr-2">
      <div class="mt-[7px] flex h-[21px] items-center pl-[5px] font-bold text-[#666]"><svg class="mt-[3px] h-3 w-3 text-[#346187]"><use href="#down"/></svg><span class="ml-[7px] tracking-[0.6px]">Bubble Color</span></div>
      <div class="ml-2 mt-[10px] flex h-8 items-center rounded-[2px] border border-[#bfbfbf] bg-[#f7f7f7] pr-[7px] text-[#346187]">
        <svg class="ml-[10px] h-[13px] w-[2px]" viewBox="0 0 2 13"><path d="M1 0v13" stroke="currentColor" stroke-width="2" stroke-dasharray="1.500 2.200"/></svg>
        <svg class="ml-[9px] h-[14px] w-[14px]"><use href="#down"/></svg>
        <svg class="ml-[8px] h-[18px] w-[18px]" viewBox="0 0 18 18" fill="none" stroke="currentColor" stroke-width="1.200"><ellipse cx="9" cy="4" rx="2" ry="3"/><ellipse cx="9" cy="14" rx="2" ry="3"/><ellipse cx="4" cy="9" rx="3" ry="2"/><ellipse cx="14" cy="9" rx="3" ry="2"/><path d="M7 7l4 4M11 7l-4 4"/></svg>
        <span class="-mt-[3px] ml-[7px] tracking-[0.2px]">Product Group</span><svg class="ml-auto h-[13px] w-[13px]"><use href="#x"/></svg>
      </div>
    </div>
    <div class="flex h-[89px] flex-col border-b border-[#d9d9d9] pr-2">
      <div class="mt-[7px] flex h-[21px] items-center pl-[5px] font-bold text-[#666]"><svg class="mt-[3px] h-3 w-3 text-[#346187]"><use href="#down"/></svg><span class="ml-[7px] tracking-[0.5px]">Bubble Size</span></div>
      <div class="ml-2 mt-[10px] flex h-8 items-center whitespace-nowrap rounded-[2px] border border-[#bfbfbf] bg-[#f7f7f7] pr-[7px] text-[#346187]">
        <svg class="ml-[10px] h-[13px] w-[2px]" viewBox="0 0 2 13"><path d="M1 0v13" stroke="currentColor" stroke-width="2" stroke-dasharray="1.500 2.200"/></svg>
        <svg class="ml-[9px] h-[14px] w-[14px]"><use href="#down"/></svg>
        <svg class="ml-[8px] h-[18px] w-[18px]" viewBox="0 0 18 18" fill="none" stroke="currentColor" stroke-width="1.200"><path d="M1 7.500V3.500h16v4M4 3.500V7M6.500 3.500V7M9 3.500V7M11.500 3.500V7M14 3.500V7M1 11.500h9M14 11.500h3M1 14.500h16M12 10.500l2 3h-4z"/></svg>
        <span class="-mt-[3px] ml-[7px] tracking-[0.17px]">Open Sales Quotations Amount in Company Co...</span><svg class="ml-auto h-[13px] w-[13px]"><use href="#x"/></svg>
      </div>
    </div>
    <div class="flex h-[71px] flex-col border-b border-[#d9d9d9]">
      <div class="mt-[7px] flex h-[21px] items-center pl-[5px] font-bold text-[#666]"><svg class="mt-[3px] h-3 w-3 text-[#346187]"><use href="#down"/></svg><span class="ml-[7px] tracking-[0.3px]">Filters</span></div>
      <div class="mt-[10px] flex h-5 items-center pl-[10px] text-[12px] text-[#346187]"><svg class="h-[14px] w-[14px]" viewBox="0 0 14 14"><path d="M7 2v10M2 7h10" stroke="currentColor" stroke-width="1.400"/></svg><span class="ml-[2px] tracking-[0.3px]">Add Filters</span></div>
    </div>
    <div class="flex h-10 items-center border-b border-[#d9d9d9] pb-[2px] pl-1 font-bold text-[#666]"><svg class="h-3 w-3 text-[#346187]"><use href="#right"/></svg><svg class="ml-[7px] h-4 w-4 text-[#346187]"><use href="#warn"/></svg><span class="ml-[11px] tracking-[0.38px]">Cluster Properties</span></div>
    <div class="flex h-10 items-center pb-[2px] pl-1 font-bold text-[#666]"><svg class="h-3 w-3 text-[#346187]"><use href="#right"/></svg><span class="ml-2 tracking-[0.45px]">Layer Add-ons</span></div>
  </div>

  <div class="absolute left-[11px] top-[263px] h-[254px] w-[441px] border-[5px] border-[#fdb900] shadow-[0_3px_3px_rgba(0,0,0,0.65),inset_0_3px_1px_rgba(0,0,0,0.6),inset_0_0_2px_rgba(0,0,0,0.3)]"></div>
</aside>

</div>
</div>
</div>
</body>
</html>
